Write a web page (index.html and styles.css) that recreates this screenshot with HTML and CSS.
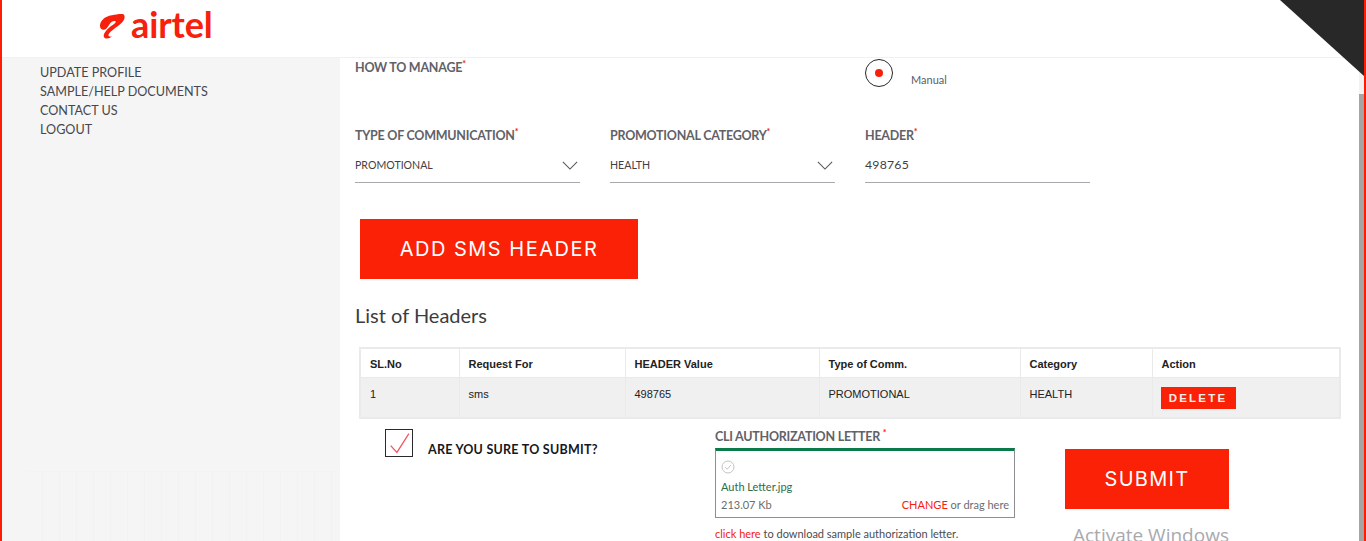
FILE: index.html
```html
<!DOCTYPE html>
<html lang="en">
<head>
<meta charset="utf-8">
<title>Airtel - SMS Header</title>
<link rel="stylesheet" href="styles.css">
</head>
<body>
<header class="topbar">
  <div class="logo">
    <svg class="logo-mark" viewBox="0 0 26 26" aria-hidden="true"><path d="M1 12C2 6 8 3 13 2.300C17 1.700 22 .5 24.800 1.500C26.500 4 25.500 7 22.500 10C18.500 14 11.500 17.500 9.500 21.500C9 23 10.500 24 13 23.500C10.500 25.800 6 26.300 5 24C3.500 21 8 16.500 11.500 13.500C14 11.500 17.300 9.800 16.800 8.500C16.300 7.500 14 7.800 12.500 9C10.500 10.500 9.500 13.500 7.500 15.500C5 18 .5 17 1 12Z"/></svg>
    <span class="logo-text">airtel</span>
  </div>
</header>
<div class="corner"></div>
<div class="layout">
  <aside class="sidebar">
    <nav class="side-nav">
      <a>UPDATE PROFILE</a>
      <a>SAMPLE/HELP DOCUMENTS</a>
      <a>CONTACT US</a>
      <a>LOGOUT</a>
    </nav>
    <div class="side-stripes"></div>
  </aside>
  <main class="main">
    <div class="form-row row-manage">
      <div class="label">HOW TO MANAGE<sup class="req">*</sup></div>
      <div></div>
      <div class="radio-field">
        <span class="radio"><span class="radio-dot"></span></span>
        <span class="radio-text">Manual</span>
      </div>
    </div>
    <div class="form-row">
      <div>
        <div class="label">TYPE OF COMMUNICATION<sup class="req">*</sup></div>
        <div class="control"><span>PROMOTIONAL</span>
          <svg class="chevron" viewBox="0 0 18 10" aria-hidden="true"><path d="M1 1l8 8 8-8"/></svg>
        </div>
      </div>
      <div>
        <div class="label">PROMOTIONAL CATEGORY<sup class="req">*</sup></div>
        <div class="control"><span>HEALTH</span>
          <svg class="chevron" viewBox="0 0 18 10" aria-hidden="true"><path d="M1 1l8 8 8-8"/></svg>
        </div>
      </div>
      <div>
        <div class="label">HEADER<sup class="req">*</sup></div>
        <div class="control control-value"><span>498765</span></div>
      </div>
    </div>
    <button class="btn-add">ADD SMS HEADER</button>
    <h2 class="list-title">List of Headers</h2>
    <table class="headers">
      <thead>
        <tr>
          <th class="c1">SL.No</th><th class="c2">Request For</th><th class="c3">HEADER Value</th><th class="c4">Type of Comm.</th><th class="c5">Category</th><th class="c6">Action</th>
        </tr>
      </thead>
      <tbody>
        <tr>
          <td>1</td><td>sms</td><td>498765</td><td>PROMOTIONAL</td><td>HEALTH</td><td><button class="btn-delete">DELETE</button></td>
        </tr>
      </tbody>
    </table>
    <div class="bottom">
      <div class="confirm">
        <span class="checkbox"><svg viewBox="0 0 25 25" aria-hidden="true"><path d="M4.500 15l6 6.500L22 3.500"/></svg></span>
        <span class="confirm-text">ARE YOU SURE TO SUBMIT?</span>
      </div>
      <div class="upload">
        <div class="label upload-label">CLI AUTHORIZATION LETTER <sup class="req">*</sup></div>
        <div class="dropbox">
          <svg class="ok" viewBox="0 0 14 14" aria-hidden="true"><circle cx="7" cy="7" r="6"/><path d="M4.200 7.200l2 2 3.600-4"/></svg>
          <div class="file-name">Auth Letter.jpg</div>
          <div class="file-meta"><span>213.07 Kb</span><span><span class="red">CHANGE</span> or drag here</span></div>
        </div>
        <div class="sample"><span class="red">click here</span> to download sample authorization letter.</div>
      </div>
      <button class="btn-submit">SUBMIT</button>
    </div>
  </main>
  <div class="scrollbar"><div class="thumb"></div></div>
</div>
<div class="watermark">Activate Windows</div>
</body>
</html>
```
FILE: styles.css
```css
* { box-sizing: border-box; }
html, body { margin: 0; height: 541px; overflow: hidden; }
body {
  position: relative;
  display: flex;
  flex-direction: column;
  background: #fff;
  border-left: 2px solid #fb1e05;
  border-right: 2px solid #fb1e05;
  font-family: Lato, "Liberation Sans", sans-serif;
  color: #3a3a3e;
}
.topbar {
  height: 58px;
  flex: none;
  background: #fff;
  border-bottom: 1px solid #f1f1f2;
  padding: 3px 0 0 97px;
}
.logo { display: flex; align-items: center; gap: 6px; color: #f6200c; }
.logo-mark { width: 26px; height: 26px; fill: #f6200c; margin-top: 4px; }
.logo-text { font-size: 36px; line-height: 42px; font-weight: 700; letter-spacing: -.1px; }
.corner {
  position: absolute;
  top: 0;
  right: 0;
  width: 84px;
  height: 76px;
  background: #282828;
  clip-path: polygon(0 0, 100% 0, 100% 100%);
}
.layout { flex: 1; display: flex; min-height: 0; }
.sidebar {
  width: 338px;
  flex: none;
  background: #f5f5f6;
  display: flex;
  flex-direction: column;
}
.side-nav { display: flex; flex-direction: column; padding: 5px 0 0 38px; font-size: 12.600px; line-height: 19px; color: #47474c; }
.side-stripes {
  margin: auto 0 0 24px;
  height: 70px;
  border-top: 1px solid #f3f3f4;
  background: repeating-linear-gradient(90deg, #f5f5f6 0 16px, #f2f2f3 16px 17px);
}
.main { flex: 1; min-width: 0; padding-left: 15px; overflow: hidden; }
.form-row { display: grid; grid-template-columns: 225px 225px 225px; column-gap: 30px; }
.row-manage { height: 68px; }
.label { font-size: 12.500px; line-height: 20px; font-weight: 700; color: #616167; letter-spacing: -.25px; }
.req { color: #f6200c; font-size: 9px; line-height: 0; vertical-align: 5px; }
.radio-field { display: flex; padding-top: 1px; gap: 18px; }
.radio {
  width: 28px;
  height: 28px;
  border: 1.500px solid #28282c;
  border-radius: 50%;
  display: flex;
  align-items: center;
  justify-content: center;
}
.radio-dot { width: 8px; height: 8px; border-radius: 50%; background: #f6200c; }
.radio-text { font-size: 11px; line-height: 14px; margin-top: 14px; color: #5d5d63; }
.control {
  height: 37px;
  display: flex;
  align-items: center;
  justify-content: space-between;
  padding: 2px 2px 0 0;
  border-bottom: 1px solid #a9a9ad;
  font-size: 10.600px;
  color: #3f3f44;
}
.control-value { font-size: 12.300px; letter-spacing: .2px; padding-top: 0; }
.chevron { width: 16px; height: 9px; fill: none; stroke: #55555a; stroke-width: 1.200; }
.btn-add {
  display: block;
  width: 278px;
  height: 60px;
  margin: 36px 0 0 5px;
  border: 0;
  background: #fb2107;
  color: #fff;
  font: 400 20px Inter, Lato, sans-serif;
  letter-spacing: 1.500px;
}
.list-title { margin: 24px 0 0; font-size: 20px; line-height: 24px; font-weight: 400; color: #3c3c41; }
.headers {
  width: 980px;
  height: 70px;
  margin: 20px 0 0 4px;
  table-layout: fixed;
  border-collapse: collapse;
  border: 2px solid #eaeaea;
  font-family: "Liberation Sans", Arial, sans-serif;
  font-size: 11px;
  color: #222;
}
.headers th, .headers td { border: 1.500px solid #eaeaea; padding: 0 8px 0 9px; text-align: left; }
.headers th { height: 29px; font-weight: 700; padding-top: 2px; }
.headers td { height: 41px; background: #f0f0f1; vertical-align: top; padding-top: 10px; }
.c1 { width: 99px; } .c2 { width: 166px; } .c3 { width: 194px; } .c4 { width: 201px; } .c5 { width: 132px; } .c6 { width: 188px; }
.headers td:last-child { padding: 9px 0 0 8px; }
.btn-delete {
  display: block;
  width: 75px;
  height: 22px;
  border: 0;
  padding: 0;
  background: #fb2107;
  color: #f8eeea;
  font: 700 11.500px "Liberation Sans", Arial, sans-serif;
  letter-spacing: 2.200px;
}
.bottom { display: flex; padding-left: 30px; }
.confirm { width: 330px; flex: none; display: flex; padding-top: 10px; }
.checkbox { width: 28px; height: 28px; border: 1.500px solid #2a2a2e; }
.checkbox svg { display: block; width: 100%; height: 100%; fill: none; stroke: #f2545f; stroke-width: 1.200; }
.confirm-text { margin: 13px 0 0 15px; font-size: 12.500px; line-height: 16px; font-weight: 700; letter-spacing: .25px; color: #17171c; }
.upload { width: 300px; flex: none; padding-top: 8px; }
.upload-label { margin-bottom: 1px; }
.dropbox {
  height: 70px;
  border: 1px solid #8e8e92;
  border-top: 3px solid #0b7a4a;
  padding: 9px 5px 0;
  font-size: 11px;
  color: #6c6c70;
}
.ok { display: block; width: 14px; height: 14px; fill: none; stroke: #c4c4c4; stroke-width: 1; }
.file-name { margin-top: 4px; line-height: 18px; color: #2f6b46; }
.file-meta { display: flex; justify-content: space-between; line-height: 18px; }
.sample { margin-top: 8px; font-size: 11px; line-height: 15px; color: #4c4c50; }
.red { color: #f6200c; }
.btn-submit {
  width: 164px;
  height: 60px;
  margin: 30px 0 0 50px;
  border: 0;
  background: #fb2107;
  color: #fff;
  font: 400 20px Inter, Lato, sans-serif;
  letter-spacing: 1.300px;
}
.scrollbar { width: 5px; flex: none; background: #f3f3f3; padding-top: 36px; }
.thumb { height: 100%; background: #a5a5a5; }
.watermark {
  position: absolute;
  left: 1071px;
  top: 524px;
  font-size: 19px;
  line-height: 22px;
  color: #a9a9ad;
  font-family: "Open Sans", sans-serif;
}
```
